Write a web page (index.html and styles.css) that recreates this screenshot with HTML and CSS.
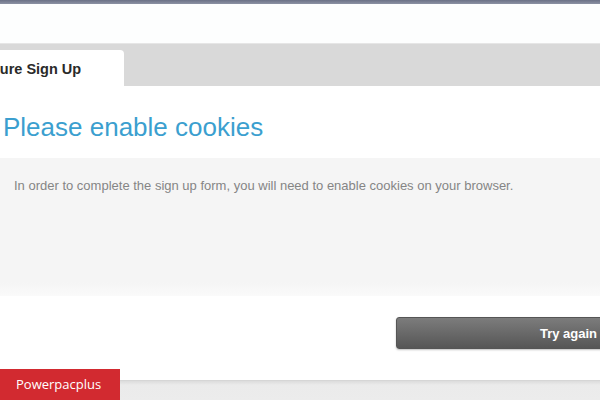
FILE: index.html
```
<!DOCTYPE html>
<html lang="en">
<head>
    <meta charset="UTF-8">
    <meta name="viewport" content="width=device-width, initial-scale=1.0">
    <title>Secure Sign Up</title>
    <link rel="stylesheet" href="styles.css">
</head>
<body>
    <div class="page">
        <div class="top-strip"></div>
        <div class="header"></div>

        <div class="tab-bar">
            <div class="tab">Secure Sign Up</div>
        </div>

        <div class="content">
            <h1 class="title">Please enable cookies</h1>
            <div class="notice">
                <p>In order to complete the sign up form, you will need to enable cookies on your browser.</p>
            </div>
            <div class="actions">
                <button type="button" class="retry-btn">Try again</button>
            </div>
        </div>

        <div class="footer"></div>
    </div>

    <div class="badge">Powerpacplus</div>
</body>
</html>
```

FILE: styles.css
```
body {
    font-family: "Liberation Sans", Arial, sans-serif;
    margin: 0;
    padding: 0;
    background-color: #fff;
}

.page {
    width: 600px;
    height: 400px;
    overflow: hidden;
}

.top-strip {
    height: 4px;
    background: linear-gradient(#6b7186, #8c92a4);
}

.header {
    height: 39px;
    background: #fdfefe;
}

.tab-bar {
    height: 36px;
    padding-top: 6px;
    background: #d9d9d9;
    border-top: 1px solid #e6e6e6;
}

.tab {
    width: 150px;
    height: 36px;
    margin-left: -46px;
    padding-left: 20px;
    line-height: 38px;
    background: #fff;
    border-top-right-radius: 4px;
    font-size: 14.5px;
    font-weight: bold;
    color: #2a2a2a;
    white-space: nowrap;
}

.content {
    padding-top: 26px;
}

.title {
    margin: 0 0 16px 3px;
    font-size: 26px;
    line-height: 30px;
    font-weight: normal;
    color: #3b9fcf;
}

.notice {
    height: 118px;
    padding: 20px 14px 0;
    background: linear-gradient(#f5f5f5 90%, #fafafa);
}

.notice p {
    margin: 0;
    font-size: 13px;
    line-height: 16px;
    color: #858585;
}

.actions {
    display: flex;
    padding: 21px 0 0 396px;
    height: 63px;
}

.retry-btn {
    flex-shrink: 0;
    width: 216px;
    height: 32px;
    padding: 0 14px 0 0;
    text-align: right;
    border: 1px solid #555;
    border-radius: 3px;
    background: linear-gradient(#7c7c7c, #565656);
    color: #fff;
    font-family: "Liberation Sans", Arial, sans-serif;
    font-size: 13px;
    font-weight: bold;
    box-shadow: 0 1px 2px rgba(0, 0, 0, 0.25);
    cursor: pointer;
}

.footer {
    height: 20px;
    border-top: 1px solid #d6d6d6;
    background: linear-gradient(#dcdcdc, #ebebeb 4px, #ececec);
}

.badge {
    position: absolute;
    left: 0;
    bottom: 0;
    width: 104px;
    height: 31px;
    padding-left: 16px;
    line-height: 30px;
    background: #d22a30;
    color: #fff;
    font-family: "Open Sans", sans-serif;
    font-size: 13px;
}
```
